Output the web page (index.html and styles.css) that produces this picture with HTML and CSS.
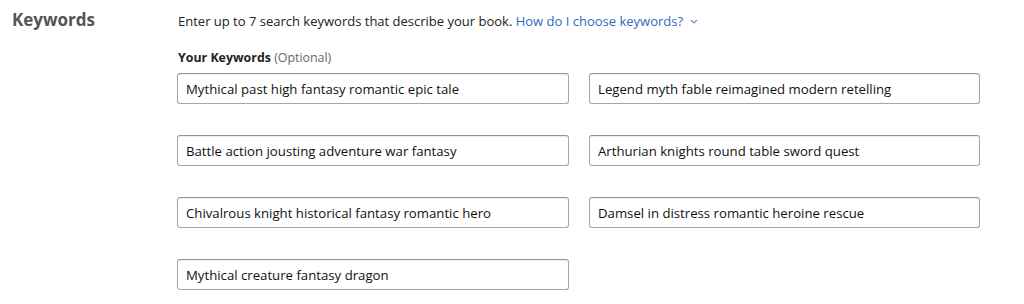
FILE: index.html
```html
<!DOCTYPE html>
<html lang="en">
<head>
    <meta charset="UTF-8">
    <meta name="viewport" content="width=device-width, initial-scale=1.0">
    <title>Keywords</title>
    <link rel="stylesheet" href="styles.css">
</head>
<body>
    <section class="section">
        <h2 class="section-title">Keywords</h2>
        <div class="section-body">
            <p class="intro">
                Enter up to 7 search keywords that describe your book.
                <a href="#" class="help-link">How do I choose keywords?
                    <svg class="chevron" width="8" height="5" viewBox="0 0 8 5"><path d="M1 1l3 3 3-3" fill="none" stroke="currentColor" stroke-width="1.1"/></svg>
                </a>
            </p>
            <div class="field-label">Your Keywords <span class="optional">(Optional)</span></div>
            <div class="keyword-grid">
                <input type="text" class="keyword-input" value="Mythical past high fantasy romantic epic tale">
                <input type="text" class="keyword-input" value="Legend myth fable reimagined modern retelling">
                <input type="text" class="keyword-input" value="Battle action jousting adventure war fantasy">
                <input type="text" class="keyword-input" value="Arthurian knights round table sword quest">
                <input type="text" class="keyword-input" value="Chivalrous knight historical fantasy romantic hero">
                <input type="text" class="keyword-input" value="Damsel in distress romantic heroine rescue">
                <input type="text" class="keyword-input" value="Mythical creature fantasy dragon">
            </div>
        </div>
    </section>
</body>
</html>
```

FILE: styles.css
```css
body {
    margin: 0;
    font-family: "Open Sans", Arial, sans-serif;
    color: #222;
    background: #fff;
}
.section {
    display: flex;
    padding: 9px 0 0 12px;
}
.section-title {
    width: 166px;
    margin: 0;
    font-size: 17px;
    font-weight: 700;
    color: #555;
    line-height: 22px;
}
.section-body {
    flex: 1;
}
.intro {
    margin: 2px 0 0;
    font-size: 13px;
    line-height: 20px;
    color: #222;
}
.help-link {
    color: #2f6ac4;
    text-decoration: none;
}
.chevron {
    margin-left: 4px;
    vertical-align: 2px;
    color: #6b8fc9;
}
.field-label {
    margin-top: 18px;
    font-size: 12.4px;
    font-weight: 700;
    line-height: 17px;
    color: #222;
}
.optional {
    font-weight: 400;
    color: #666;
}
.keyword-grid {
    display: grid;
    grid-template-columns: 392px 391px;
    column-gap: 20px;
    row-gap: 31px;
    margin-top: 7px;
    margin-left: -1px;
}
.keyword-input {
    box-sizing: border-box;
    height: 31px;
    padding: 0 8px;
    border: 1px solid #a6a6a6;
    border-top-color: #949494;
    border-radius: 3px;
    box-shadow: 0 1px 0 rgba(0, 0, 0, 0.07) inset;
    font-family: "Open Sans", Arial, sans-serif;
    font-size: 13.2px;
    color: #111;
    background: #fff;
}
```
